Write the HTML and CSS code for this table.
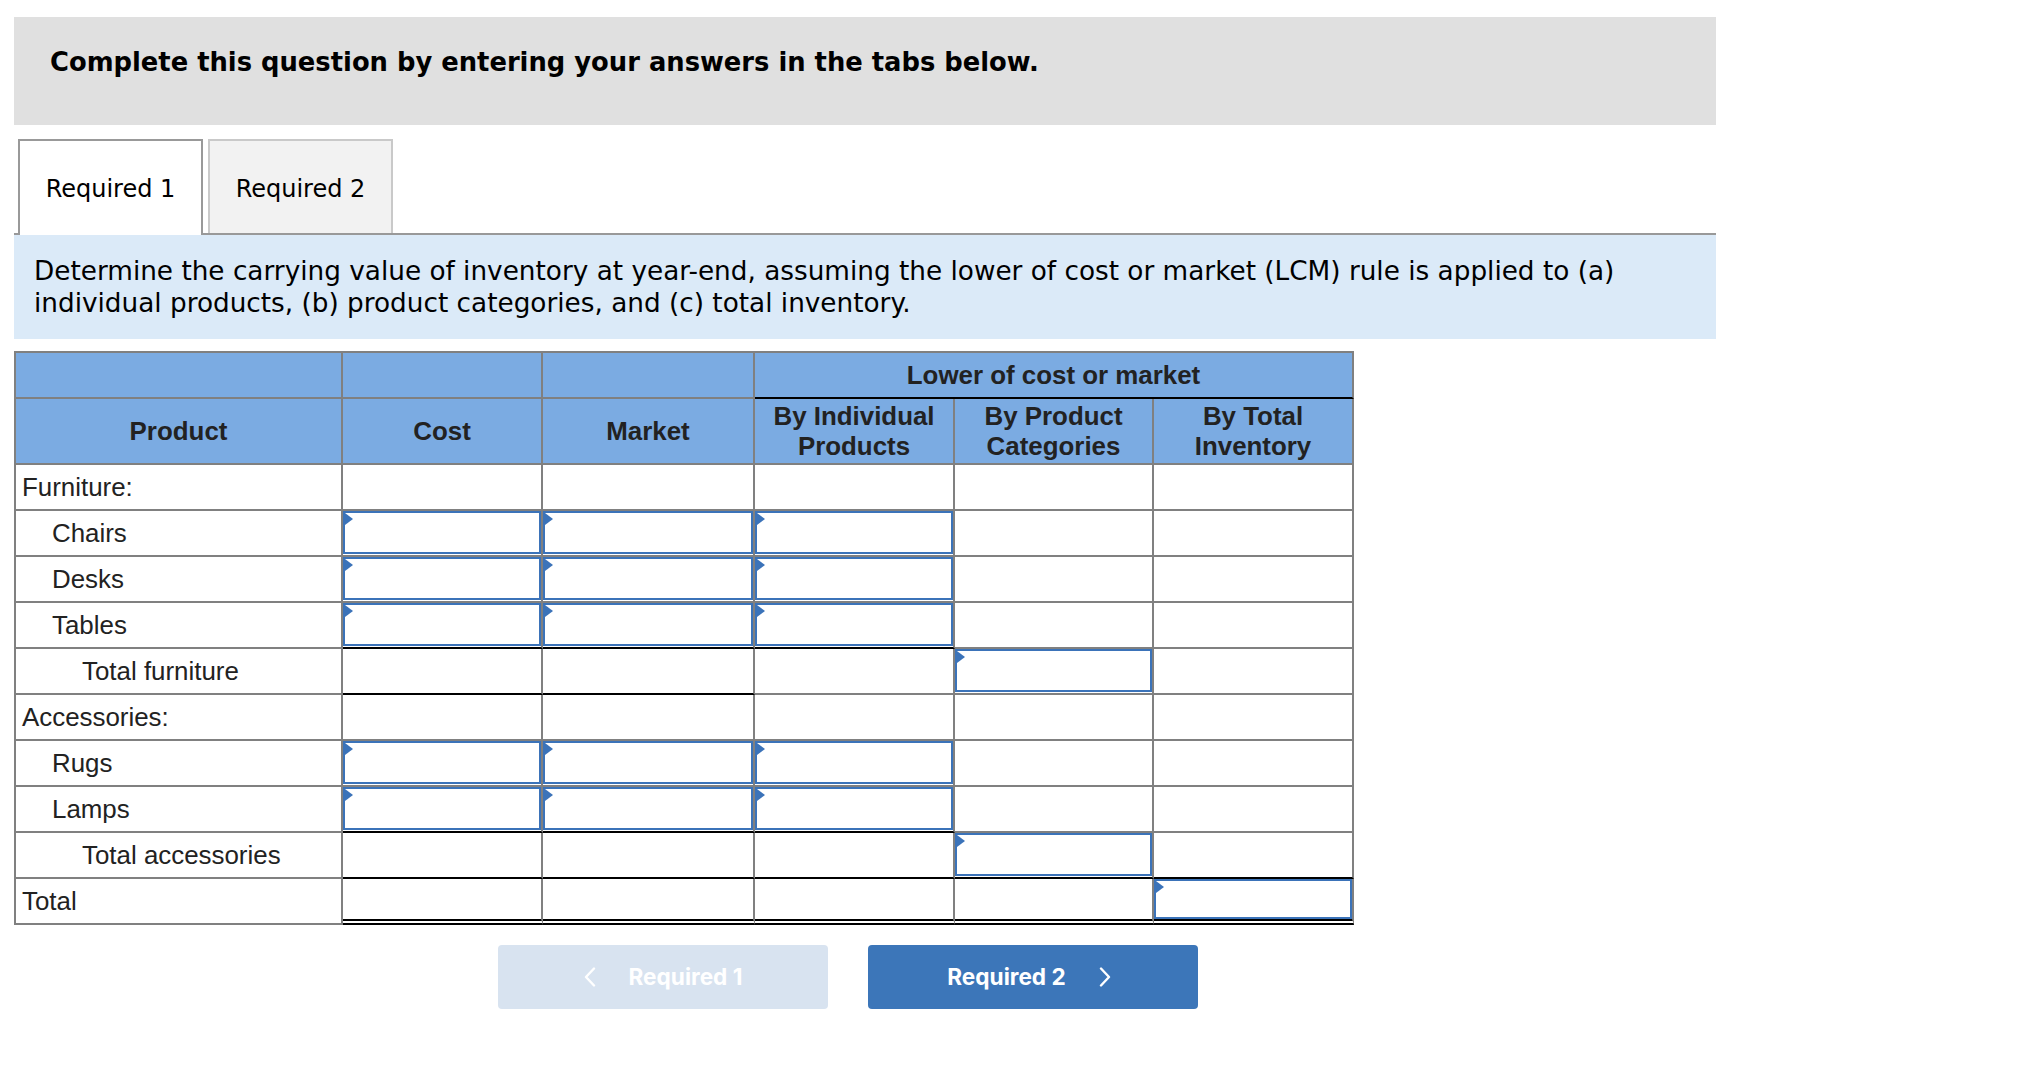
FILE: index.html
```html
<!DOCTYPE html>
<html lang="en">
<head>
<meta charset="utf-8">
<title>Inventory LCM</title>
<link rel="stylesheet" href="styles.css">
</head>
<body>
<div class="page">
  <div class="banner">Complete this question by entering your answers in the tabs below.</div>

  <div class="tabs">
    <div class="tab active">Required 1</div>
    <div class="tab">Required 2</div>
  </div>

  <div class="prompt">Determine the carrying value of inventory at year-end, assuming the lower of cost or market (LCM) rule is applied to (a) individual products, (b) product categories, and (c) total inventory.</div>

  <table class="grid">
    <colgroup>
      <col class="w-prod">
      <col class="w-cost">
      <col class="w-mkt">
      <col class="w-ind">
      <col class="w-cat">
      <col class="w-tot">
    </colgroup>
    <thead>
      <tr class="h1">
        <th></th>
        <th></th>
        <th></th>
        <th colspan="3" class="lcm">Lower of cost or market</th>
      </tr>
      <tr class="h2">
        <th>Product</th>
        <th>Cost</th>
        <th>Market</th>
        <th>By Individual<br>Products</th>
        <th>By Product<br>Categories</th>
        <th>By Total<br>Inventory</th>
      </tr>
    </thead>
    <tbody>
      <tr class="r">
        <td class="lbl">Furniture:</td>
        <td></td><td></td><td></td><td></td><td></td>
      </tr>
      <tr class="r">
        <td class="lbl ind1">Chairs</td>
        <td class="in"><div class="box"></div></td>
        <td class="in"><div class="box"></div></td>
        <td class="in"><div class="box"></div></td>
        <td></td><td></td>
      </tr>
      <tr class="r">
        <td class="lbl ind1">Desks</td>
        <td class="in"><div class="box"></div></td>
        <td class="in"><div class="box"></div></td>
        <td class="in"><div class="box"></div></td>
        <td></td><td></td>
      </tr>
      <tr class="r">
        <td class="lbl ind1">Tables</td>
        <td class="in ul"><div class="box"></div></td>
        <td class="in ul"><div class="box"></div></td>
        <td class="in ul"><div class="box"></div></td>
        <td></td><td></td>
      </tr>
      <tr class="r">
        <td class="lbl ind2">Total furniture</td>
        <td class="ul"></td>
        <td class="ul"></td>
        <td></td>
        <td class="in"><div class="box"></div></td>
        <td></td>
      </tr>
      <tr class="r">
        <td class="lbl">Accessories:</td>
        <td></td><td></td><td></td><td></td><td></td>
      </tr>
      <tr class="r">
        <td class="lbl ind1">Rugs</td>
        <td class="in"><div class="box"></div></td>
        <td class="in"><div class="box"></div></td>
        <td class="in"><div class="box"></div></td>
        <td></td><td></td>
      </tr>
      <tr class="r">
        <td class="lbl ind1">Lamps</td>
        <td class="in ul"><div class="box"></div></td>
        <td class="in ul"><div class="box"></div></td>
        <td class="in ul"><div class="box"></div></td>
        <td></td><td></td>
      </tr>
      <tr class="r">
        <td class="lbl ind2">Total accessories</td>
        <td class="ul"></td>
        <td class="ul"></td>
        <td class="ul"></td>
        <td class="in ul"><div class="box"></div></td>
        <td class="ul"></td>
      </tr>
      <tr class="r total">
        <td class="lbl">Total</td>
        <td class="dbl"></td>
        <td class="dbl"></td>
        <td class="dbl"></td>
        <td class="dbl"></td>
        <td class="in dbl"><div class="box short"></div></td>
      </tr>
    </tbody>
  </table>

  <div class="nav">
    <button class="btn prev" type="button" disabled>
      <svg class="chev" width="12" height="20" viewBox="0 0 12 20"><polyline points="10,1.5 2,10 10,18.5"/></svg>
      <span>Required 1</span>
    </button>
    <button class="btn next" type="button">
      <span>Required 2</span>
      <svg class="chev" width="12" height="20" viewBox="0 0 12 20"><polyline points="2,1.5 10,10 2,18.5"/></svg>
    </button>
  </div>
</div>
</body>
</html>
```

FILE: styles.css
```css
html, body {
  margin: 0;
  padding: 0;
  background: #ffffff;
}

.page {
  padding: 17px 0 0 14px;
  width: 1702px;
}

.banner {
  height: 108px;
  box-sizing: border-box;
  background: #e0e0e0;
  padding: 30px 0 0 36px;
  font-family: "DejaVu Sans", Verdana, sans-serif;
  font-weight: bold;
  font-size: 25.8px;
  line-height: normal;
  color: #000;
}

.tabs {
  display: flex;
  align-items: flex-start;
  gap: 5px;
  margin-top: 14px;
  padding-left: 4px;
  height: 94px;
  border-bottom: 2px solid #999999;
}

.tab {
  box-sizing: border-box;
  width: 185px;
  height: 94px;
  padding-top: 35px;
  text-align: center;
  font-family: "DejaVu Sans", Verdana, sans-serif;
  font-size: 24px;
  line-height: 27px;
  color: #000;
  background: #f2f2f2;
  border: 2px solid #c9c9c9;
  border-bottom: 0;
}

.tab.active {
  height: 96px;
  background: #ffffff;
  border-color: #999999;
}

.prompt {
  background: #dbeaf8;
  padding: 20px 20px 19px 20px;
  font-family: "DejaVu Sans", Verdana, sans-serif;
  font-size: 26.3px;
  line-height: 32.4px;
  color: #000;
}

.grid {
  margin-top: 12px;
  border-collapse: separate;
  border-spacing: 0;
  table-layout: fixed;
  width: 1340px;
  border-top: 2px solid #808080;
  border-left: 2px solid #808080;
  font-family: "Liberation Sans", Arial, sans-serif;
  font-size: 25.9px;
  color: #222222;
}

.w-prod { width: 327px; }
.w-cost { width: 200px; }
.w-mkt  { width: 212px; }
.w-ind  { width: 200px; }
.w-cat  { width: 199px; }
.w-tot  { width: 200px; }

.grid th,
.grid td {
  box-sizing: border-box;
  padding: 0;
  border-right: 2px solid #808080;
  border-bottom: 2px solid #808080;
}

.grid th {
  background: #7babe2;
  font-weight: bold;
  text-align: center;
  vertical-align: middle;
  line-height: 30px;
  color: #222222;
}

.grid th.lcm {
  border-bottom-color: #000000;
}

.h1 { height: 46px; }
.h2 { height: 66px; }
.r  { height: 46px; }

.grid td {
  vertical-align: middle;
  background: #ffffff;
  padding-top: 1px;
}

.grid td.lbl { padding-left: 6px; }
.grid td.ind1 { padding-left: 36px; }
.grid td.ind2 { padding-left: 66px; }

.grid td.in {
  vertical-align: top;
  padding-top: 0;
}

.grid td.ul {
  border-bottom-color: #000000;
}

.grid td.dbl {
  border-bottom: 6px double #000000;
}

.box {
  position: relative;
  box-sizing: border-box;
  height: 43px;
  border: 2px solid #3b73b9;
  background: #ffffff;
}

.box.short {
  height: 40px;
}

.box::before {
  content: "";
  position: absolute;
  top: 0;
  left: 0;
  width: 0;
  height: 0;
  border-top: 6px solid transparent;
  border-bottom: 6px solid transparent;
  border-left: 8px solid #3b73b9;
}

.nav {
  display: flex;
  gap: 40px;
  margin-top: 20px;
  padding-left: 484px;
}

.btn {
  width: 330px;
  height: 64px;
  border: 0;
  border-radius: 4px;
  display: flex;
  align-items: center;
  justify-content: center;
  gap: 33px;
  padding: 0;
  font-family: Inter, Roboto, "Liberation Sans", sans-serif;
  font-weight: 700;
  font-size: 22.6px;
  color: #ffffff;
  cursor: pointer;
}

.btn.prev {
  background: #d8e3f0;
}

.btn.next {
  background: #3c76b9;
  padding-right: 8px;
}

.chev {
  display: block;
  fill: none;
  stroke: #ffffff;
  stroke-width: 2.4;
  stroke-linecap: round;
  stroke-linejoin: round;
}
```
